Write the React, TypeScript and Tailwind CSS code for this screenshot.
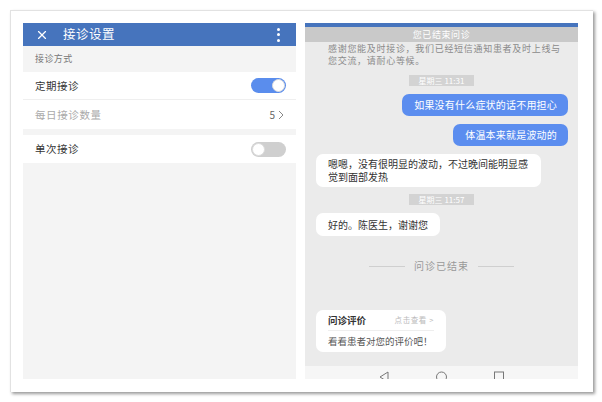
import { X } from 'lucide-react';

const font = { fontFamily: '"Noto Sans CJK SC", "Noto Sans", sans-serif' };

function Toggle({ on }: { on: boolean }) {
  return (
    <div
      className={`w-[35px] h-[15px] rounded-full flex items-center px-px ${
        on ? 'bg-[#5a8ded] justify-end' : 'bg-[#cfcfcf] justify-start'
      }`}
    >
      <div className="w-[13px] h-[13px] rounded-full bg-white border border-[#dcdcdc]" />
    </div>
  );
}

function SettingsScreen() {
  return (
    <div className="w-[273px] h-[356px] bg-[#f4f4f4] flex flex-col">
      {/* Header */}
      <div className="h-[23px] bg-[#4674bd] flex items-center pl-[12px] pr-[16px] text-white">
        <X size={14} strokeWidth={2} />
        <span className="ml-[14px] text-[12.5px] tracking-[0.5px] leading-none">接诊设置</span>
        <div className="ml-auto flex flex-col gap-[2.5px]">
          <span className="w-[3px] h-[3px] rounded-full bg-white" />
          <span className="w-[3px] h-[3px] rounded-full bg-white" />
          <span className="w-[3px] h-[3px] rounded-full bg-white" />
        </div>
      </div>

      <div className="h-[26px] flex items-center pl-[12px] text-[9px] tracking-[0.4px] text-[#777]">接诊方式</div>

      <div className="bg-white">
        <div className="h-[28px] flex items-center justify-between pl-[12px] pr-[10px] border-b border-[#efefef]">
          <span className="text-[10.5px] tracking-[0.5px] text-[#333]">定期接诊</span>
          <Toggle on />
        </div>
        <div className="h-[29px] flex items-center justify-between pl-[12px] pr-[12px]">
          <span className="text-[10.5px] tracking-[0.6px] text-[#aaa]">每日接诊数量</span>
          <span className="flex items-center gap-[3px] text-[10px] text-[#666]">
            5
            <svg width="6" height="10" viewBox="0 0 6 10" fill="none" stroke="#888" strokeWidth="1">
              <path d="M1 1l4 4-4 4" />
            </svg>
          </span>
        </div>
      </div>

      <div className="mt-[6px] bg-white h-[28px] flex items-center justify-between pl-[12px] pr-[10px]">
        <span className="text-[10.5px] tracking-[0.5px] text-[#333]">单次接诊</span>
        <Toggle on={false} />
      </div>
    </div>
  );
}

function Stamp({ text }: { text: string }) {
  return (
    <div className="self-center w-[65px] h-[11px] bg-[#d3d3d3] text-white text-[8px] leading-[11px] text-center">
      {text}
    </div>
  );
}

function ChatScreen() {
  return (
    <div className="w-[273px] h-[356px] bg-[#ebebeb] flex flex-col overflow-hidden">
      <div className="h-[4px] bg-[#4674bd]" />
      <div className="h-[15px] bg-[#c9c9c9] text-white text-[9px] leading-[15px] text-center tracking-[0.6px]">
        您已结束问诊
      </div>

      <p className="mt-px ml-[23px] w-[236px] text-[9px] tracking-[0.7px] leading-[12px] text-[#8a8a8a]">
        感谢您能及时接诊，我们已经短信通知患者及时上线与您交流，请耐心等候。
      </p>

      <div className="mt-[8px] flex flex-col">
        <Stamp text="星期三 11:31" />

        <div className="mt-[8px] self-end mr-[10px] h-[22px] rounded-[7px] bg-[#5b8def] text-white text-[10px] tracking-[0.2px] leading-[22px] pl-[12px] pr-[11px]">
          如果没有什么症状的话不用担心
        </div>
        <div className="mt-[8px] self-end mr-[10px] h-[22px] rounded-[7px] bg-[#5b8def] text-white text-[10px] tracking-[0.2px] leading-[22px] pl-[12px] pr-[11px]">
          体温本来就是波动的
        </div>

        <div className="mt-[8px] ml-[11px] w-[225px] h-[33px] rounded-[7px] bg-white text-[#333] text-[10px] leading-[13px] px-[12px] pt-[3px]">
          嗯嗯，没有很明显的波动，不过晚间能明显感觉到面部发热
        </div>

        <div className="mt-[7px] flex flex-col">
          <Stamp text="星期三 11:57" />
        </div>

        <div className="mt-[8px] ml-[11px] self-start h-[23px] rounded-[7px] bg-white text-[#333] text-[10px] leading-[23px] pl-[12px] pr-[12px]">
          好的。陈医生，谢谢您
        </div>

        <div className="mt-[24px] flex items-center justify-center gap-[9px]">
          <span className="w-[36px] h-px bg-[#cfcfcf]" />
          <span className="text-[10px] leading-[12px] tracking-[1px] text-[#999]">问诊已结束</span>
          <span className="w-[36px] h-px bg-[#cfcfcf]" />
        </div>

        <div className="mt-[38px] ml-[11px] w-[130px] h-[42px] rounded-[7px] bg-white px-[12px] flex flex-col">
          <div className="h-[21px] flex items-center justify-between border-b border-[#eeeeee]">
            <span className="text-[9.5px] font-bold text-[#333]">问诊评价</span>
            <span className="text-[7.5px] tracking-[0.6px] text-[#bbb]">点击查看 &gt;</span>
          </div>
          <div className="h-[21px] flex items-center text-[9.5px] text-[#555]">看看患者对您的评价吧！</div>
        </div>
      </div>

      <div className="mt-auto h-[13px] bg-[#f6f6f6] flex justify-center gap-[47px] pt-[5px] overflow-hidden">
        <svg width="10" height="12" viewBox="0 0 10 12" fill="none" stroke="#777" strokeWidth="1">
          <path d="M9 1L1 6l8 5z" />
        </svg>
        <svg width="11" height="12" viewBox="0 0 11 12" fill="none" stroke="#777" strokeWidth="1">
          <circle cx="5.5" cy="6" r="5" />
        </svg>
        <svg width="10" height="12" viewBox="0 0 10 12" fill="none" stroke="#777" strokeWidth="1">
          <rect x="0.5" y="1" width="9" height="10" />
        </svg>
      </div>
    </div>
  );
}

export default function App() {
  return (
    <div className="w-[602px] h-[402px] bg-white pt-[10px] pl-[10px]" style={font}>
      <div className="w-[583px] h-[382px] bg-white border-t border-l border-[#e2e2e2] shadow-[2px_2px_3px_rgba(0,0,0,0.4)] pl-[12px] pt-[12px] flex gap-[9px]">
        <SettingsScreen />
        <ChatScreen />
      </div>
    </div>
  );
}
